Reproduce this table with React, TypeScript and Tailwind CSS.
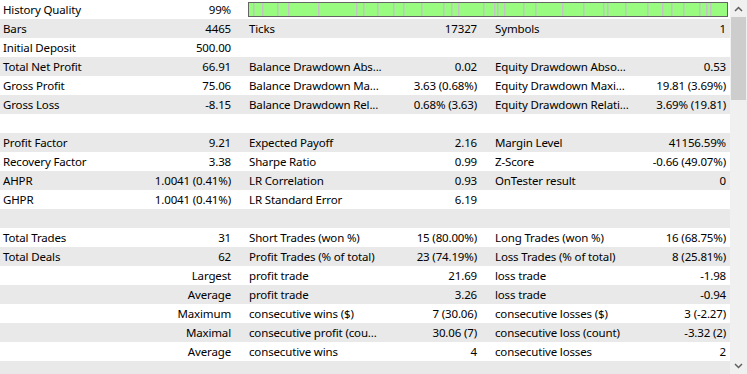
const ROWS: string[][] = [
  ['History Quality', '99%'],
  ['Bars', '4465', 'Ticks', '17327', 'Symbols', '1'],
  ['Initial Deposit', '500.00', '', '', '', ''],
  ['Total Net Profit', '66.91', 'Balance Drawdown Abs...', '0.02', 'Equity Drawdown Abso...', '0.53'],
  ['Gross Profit', '75.06', 'Balance Drawdown Ma...', '3.63 (0.68%)', 'Equity Drawdown Maxi...', '19.81 (3.69%)'],
  ['Gross Loss', '-8.15', 'Balance Drawdown Rel...', '0.68% (3.63)', 'Equity Drawdown Relati...', '3.69% (19.81)'],
  ['', '', '', '', '', ''],
  ['Profit Factor', '9.21', 'Expected Payoff', '2.16', 'Margin Level', '41156.59%'],
  ['Recovery Factor', '3.38', 'Sharpe Ratio', '0.99', 'Z-Score', '-0.66 (49.07%)'],
  ['AHPR', '1.0041 (0.41%)', 'LR Correlation', '0.93', 'OnTester result', '0'],
  ['GHPR', '1.0041 (0.41%)', 'LR Standard Error', '6.19', '', ''],
  ['', '', '', '', '', ''],
  ['Total Trades', '31', 'Short Trades (won %)', '15 (80.00%)', 'Long Trades (won %)', '16 (68.75%)'],
  ['Total Deals', '62', 'Profit Trades (% of total)', '23 (74.19%)', 'Loss Trades (% of total)', '8 (25.81%)'],
  ['', 'Largest', 'profit trade', '21.69', 'loss trade', '-1.98'],
  ['', 'Average', 'profit trade', '3.26', 'loss trade', '-0.94'],
  ['', 'Maximum', 'consecutive wins ($)', '7 (30.06)', 'consecutive losses ($)', '3 (-2.27)'],
  ['', 'Maximal', 'consecutive profit (cou...', '30.06 (7)', 'consecutive loss (count)', '-3.32 (2)'],
  ['', 'Average', 'consecutive wins', '4', 'consecutive losses', '2'],
  ['', '', '', '', '', ''],
];

// gaps in the history quality bar (px from bar start)
const GAPS = [
  5, 14, 29, 40, 70, 108, 115, 129, 145, 155, 173, 195, 203, 210, 235, 246, 249, 256, 275, 287, 314, 335,
  355, 359, 377, 399, 414, 423, 435, 451, 458, 462,
];

function QualityBar() {
  return (
    <svg width="480" height="15" viewBox="0 0 480 15" className="block">
      <rect x="0" y="0" width="480" height="15" fill="#646464" />
      <rect x="1" y="1" width="478" height="13" fill="#99fb80" />
      {GAPS.map((x) => (
        <rect key={x} x={x} y="1" width="1.5" height="13" fill="#c4c4c4" />
      ))}
    </svg>
  );
}

function Chevron({ up }: { up?: boolean }) {
  return (
    <svg width="9" height="6" viewBox="0 0 9 6">
      <polyline
        points={up ? '1,5 4.5,1.5 8,5' : '1,1 4.5,4.5 8,1'}
        fill="none"
        stroke="#606060"
        strokeWidth="1.5"
      />
    </svg>
  );
}

export default function App() {
  return (
    <div className="flex h-[374px] w-[747px] overflow-hidden bg-white font-['Noto_Sans',sans-serif] text-[11.5px] tracking-[-0.15px] text-black">
      <div className="w-[730px] shrink-0">
        {ROWS.map((row, i) => (
          <div
            key={i}
            className={`grid h-[19px] grid-cols-[150px_90px_160px_86px_154px_90px] items-center leading-[19px] ${
              i % 2 === 1 ? 'bg-[#e9e9e9]' : 'bg-white'
            }`}
          >
            <div className="truncate pl-[3px]">{row[0]}</div>
            <div className="whitespace-nowrap pr-[9px] text-right">{row[1]}</div>
            {i === 0 ? (
              <div className="col-span-4 flex items-center pl-[8px]">
                <QualityBar />
              </div>
            ) : (
              <>
                <div className="whitespace-nowrap pl-[9px]">{row[2]}</div>
                <div className="whitespace-nowrap pr-[9px] text-right">{row[3]}</div>
                <div className="whitespace-nowrap pl-[9px]">{row[4]}</div>
                <div className="whitespace-nowrap pr-[4px] text-right">{row[5]}</div>
              </>
            )}
          </div>
        ))}
      </div>
      <div className="flex w-[17px] shrink-0 flex-col bg-[#f0f0f0]">
        <div className="flex h-[17px] items-center justify-center">
          <Chevron up />
        </div>
        <div className="mx-[1px] h-[83px] bg-[#cdcdcd]" />
        <div className="flex-1" />
        <div className="flex h-[17px] items-center justify-center">
          <Chevron />
        </div>
      </div>
    </div>
  );
}
